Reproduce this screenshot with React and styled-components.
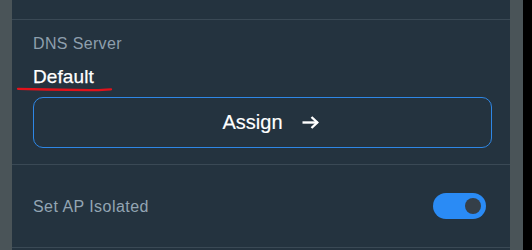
import React, { useState } from "react";
import styled, { createGlobalStyle } from "styled-components";

const Global = createGlobalStyle`
  html, body { margin: 0; padding: 0; background: #000; }
  body { font-family: "Liberation Sans", Arial, sans-serif; }
`;

const Frame = styled.div`
  display: flex;
  width: 532px;
  height: 250px;
  background: #000;
  overflow: hidden;
`;

const Strip = styled.div`
  width: ${(p) => p.$w}px;
  flex: none;
  background: #4a5458;
`;

const Panel = styled.div`
  width: 498px;
  flex: none;
  background: #24333f;
  display: flex;
  flex-direction: column;
`;

const TopSpacer = styled.div`
  height: 19px;
  border-bottom: 1px solid #3a4955;
  flex: none;
`;

const Section = styled.div`
  position: relative;
  padding: 14px 18px 16px 21px;
  border-bottom: 1px solid #3a4955;
  display: flex;
  flex-direction: column;
`;

const Label = styled.div`
  font-size: 16px;
  line-height: 20px;
  color: #8e9fad;
  letter-spacing: 0.35px;
`;

const Value = styled.div`
  margin-top: 10px;
  font-size: 19px;
  line-height: 25px;
  color: #ffffff;
  letter-spacing: 0.1px;
  -webkit-text-stroke: 0.25px #ffffff;
`;

const Underline = styled.svg`
  position: absolute;
  left: 4px;
  top: 64px;
  width: 98px;
  height: 10px;
  pointer-events: none;
`;

const AssignButton = styled.button`
  margin-top: 8px;
  height: 51px;
  box-sizing: border-box;
  border: 1px solid #2e87e6;
  border-radius: 10px;
  background: transparent;
  color: #ffffff;
  font-family: "Liberation Sans", Arial, sans-serif;
  font-size: 20px;
  display: flex;
  align-items: center;
  justify-content: center;
  gap: 19px;
  padding: 0 0 0 16px;
  cursor: pointer;
  -webkit-text-stroke: 0.15px #ffffff;
`;

const Row = styled.div`
  height: 82px;
  border-bottom: 1px solid #3a4955;
  display: flex;
  align-items: center;
  justify-content: space-between;
  padding: 0 24px 0 21px;
  flex: none;
`;

const RowLabel = styled.div`
  font-size: 16px;
  color: #93a5b3;
  letter-spacing: 0.45px;
  margin-top: 2px;
`;

const Toggle = styled.button`
  width: 53px;
  height: 26px;
  border-radius: 13px;
  border: none;
  padding: 0 5px;
  background: ${(p) => (p.$on ? "#2a8bf5" : "#55626c")};
  display: flex;
  align-items: center;
  justify-content: ${(p) => (p.$on ? "flex-end" : "flex-start")};
  cursor: pointer;
`;

const Knob = styled.span`
  width: 16px;
  height: 16px;
  border-radius: 50%;
  background: #353f48;
`;

const Arrow = () => (
  <svg width="17" height="13" viewBox="0 0 17 13" fill="none">
    <path d="M0.5 6.5H15.5" stroke="#fff" strokeWidth="2.4" />
    <path d="M9.5 1L15.3 6.5L9.5 12" stroke="#fff" strokeWidth="2.4" strokeLinejoin="miter" />
  </svg>
);

export default function App() {
  const [on, setOn] = useState(true);
  return (
    <>
      <Global />
      <Frame>
        <Strip $w={12} />
        <Panel>
          <TopSpacer />
          <Section>
            <Label>DNS Server</Label>
            <Value>Default</Value>
            <Underline viewBox="0 0 98 10">
              <path
                d="M2 4.8 C 25 5.4, 55 6, 74 6.2 C 84 6.3, 90 5.6, 95 5.4"
                stroke="#e2121b"
                strokeWidth="2.3"
                fill="none"
                strokeLinecap="round"
              />
            </Underline>
            <AssignButton>
              <span>Assign</span>
              <Arrow />
            </AssignButton>
          </Section>
          <Row>
            <RowLabel>Set AP Isolated</RowLabel>
            <Toggle $on={on} onClick={() => setOn(!on)} aria-label="toggle">
              <Knob />
            </Toggle>
          </Row>
        </Panel>
        <Strip $w={13} />
      </Frame>
    </>
  );
}
